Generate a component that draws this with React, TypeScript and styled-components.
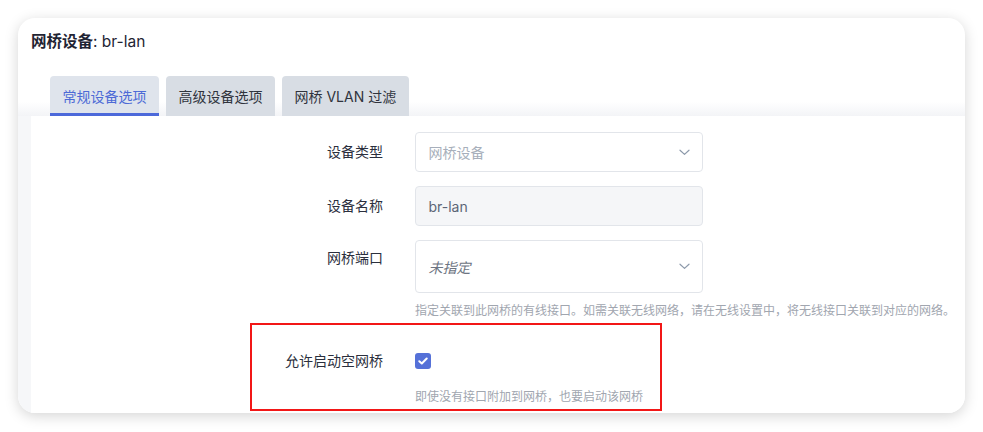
import React from "react";
import styled, { createGlobalStyle } from "styled-components";

const Global = createGlobalStyle`
  html, body { margin: 0; padding: 0; background: #ffffff; }
  body { font-family: Inter, "Noto Sans CJK SC", "Noto Sans", sans-serif; color: #2b2f3a; }
  * { box-sizing: border-box; }
`;

const Page = styled.div`
  padding: 18px;
`;

const Card = styled.div`
  height: 395px;
  background: #ffffff;
  border-radius: 17px;
  box-shadow: 0 3px 14px rgba(0, 0, 0, 0.17);
  overflow: hidden;
  display: flex;
  flex-direction: column;
`;

const Header = styled.div`
  flex-shrink: 0;
  height: 50px;
  padding: 13px 13px 0;
  font-size: 15.5px;
  line-height: 22px;
  color: #1f2433;
`;

const Strong = styled.span`
  font-weight: 700;
`;

const TabBar = styled.div`
  flex-shrink: 0;
  height: 48px;
  padding: 8px 0 0 32px;
  display: flex;
  gap: 7px;
  background: linear-gradient(to bottom, #ffffff 0%, #ffffff 70%, #f3f4f7 100%);
`;

const Tab = styled.div<{ $active?: boolean }>`
  height: 40px;
  padding: 3px 12.5px 0;
  display: flex;
  align-items: center;
  font-size: 14px;
  border-radius: 4px 4px 0 0;
  background: ${(p) => (p.$active ? "#dfe4ec" : "#d8dde4")};
  color: ${(p) => (p.$active ? "#4d6ad6" : "#30343d")};
  border-bottom: 3px solid ${(p) => (p.$active ? "#4c69da" : "transparent")};
`;

const Body = styled.div`
  flex: 1;
  min-height: 0;
  padding-left: 13px;
  background: #f6f7f9;
  display: flex;
`;

const Panel = styled.div`
  flex: 1;
  background: #ffffff;
  padding-top: 16px;
  display: flex;
  flex-direction: column;
`;

const Field = styled.div<{ $gap?: number }>`
  position: relative;
  flex-shrink: 0;
  display: grid;
  grid-template-columns: 352px 288px;
  column-gap: 32px;
  margin-bottom: ${(p) => p.$gap ?? 14}px;
`;

const Label = styled.div<{ $pt?: number }>`
  text-align: right;
  font-size: 14px;
  line-height: 20px;
  padding-top: ${(p) => p.$pt ?? 10}px;
  color: #2b2f3d;
`;

const Control = styled.div`
  display: flex;
  flex-direction: column;
`;

const Box = styled.div<{ $h?: number; $ro?: boolean }>`
  height: ${(p) => p.$h ?? 40}px;
  border: 1px solid #e2e5ea;
  border-radius: 4px;
  background: ${(p) => (p.$ro ? "#f5f6f8" : "#ffffff")};
  padding: 0 12px 0 12.5px;
  display: flex;
  align-items: center;
  justify-content: space-between;
  font-size: 14px;
`;

const Value = styled.span<{ $tone?: "placeholder" | "value" | "italic" }>`
  color: ${(p) =>
    p.$tone === "placeholder" ? "#a7afbb" : p.$tone === "italic" ? "#6d7482" : "#5b6576"};
  font-style: ${(p) => (p.$tone === "italic" ? "italic" : "normal")};
`;

const Help = styled.div<{ $mt?: number }>`
  margin-top: ${(p) => p.$mt ?? 9}px;
  font-size: 12px;
  line-height: 18px;
  color: #a1a6af;
  white-space: nowrap;
`;

const CheckWrap = styled.div`
  height: 20px;
  display: flex;
  align-items: center;
`;

const Check = styled.div`
  width: 16px;
  height: 16px;
  border-radius: 3px;
  background: #5571d8;
  display: flex;
  align-items: center;
  justify-content: center;
`;

const Annotation = styled.div`
  position: absolute;
  left: 219px;
  top: -28px;
  width: 412px;
  height: 88px;
  border: 2px solid #f21717;
  pointer-events: none;
`;

const Chevron = () => (
  <svg width="11" height="7" viewBox="0 0 11 7" fill="none">
    <polyline points="1,1.2 5.5,5.4 10,1.2" stroke="#8d9aab" strokeWidth="1.2" strokeLinecap="round" strokeLinejoin="round" />
  </svg>
);

export default function App() {
  return (
    <>
      <Global />
      <Page>
        <Card>
          <Header>
            <Strong>网桥设备</Strong>: br-lan
          </Header>
          <TabBar>
            <Tab $active>常规设备选项</Tab>
            <Tab>高级设备选项</Tab>
            <Tab>网桥 VLAN 过滤</Tab>
          </TabBar>
          <Body>
            <Panel>
              <Field>
                <Label>设备类型</Label>
                <Control>
                  <Box>
                    <Value $tone="placeholder">网桥设备</Value>
                    <Chevron />
                  </Box>
                </Control>
              </Field>
              <Field>
                <Label>设备名称</Label>
                <Control>
                  <Box $ro>
                    <Value>br-lan</Value>
                  </Box>
                </Control>
              </Field>
              <Field $gap={31}>
                <Label $pt={8}>网桥端口</Label>
                <Control>
                  <Box $h={53}>
                    <Value $tone="italic">未指定</Value>
                    <Chevron />
                  </Box>
                  <Help>指定关联到此网桥的有线接口。如需关联无线网络，请在无线设置中，将无线接口关联到对应的网络。</Help>
                </Control>
              </Field>
              <Field>
                <Label $pt={0}>允许启动空网桥</Label>
                <Control>
                  <CheckWrap>
                    <Check>
                      <svg width="10" height="8" viewBox="0 0 10 8" fill="none">
                        <polyline points="1.3,4.2 3.8,6.5 8.7,1.5" stroke="#ffffff" strokeWidth="2" strokeLinecap="round" strokeLinejoin="round" />
                      </svg>
                    </Check>
                  </CheckWrap>
                  <Help $mt={17}>即使没有接口附加到网桥，也要启动该网桥</Help>
                </Control>
                <Annotation />
              </Field>
            </Panel>
          </Body>
        </Card>
      </Page>
    </>
  );
}
